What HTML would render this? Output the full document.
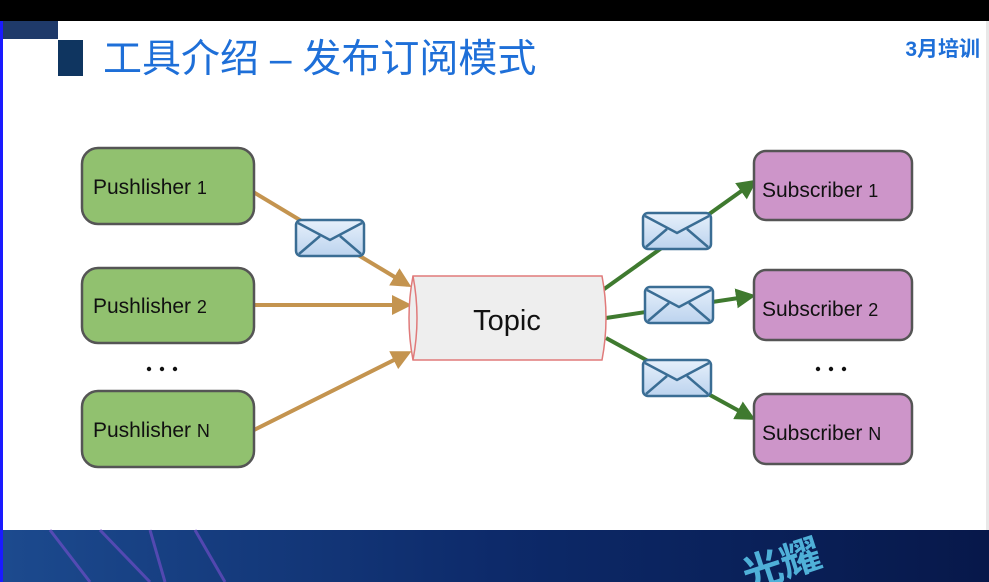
<!DOCTYPE html>
<html><head><meta charset="utf-8"><style>
html,body{margin:0;padding:0;width:989px;height:582px;overflow:hidden;background:#fff;font-family:"Liberation Sans","Noto Sans CJK SC",sans-serif}
</style></head><body>
<svg width="989" height="582" viewBox="0 0 989 582" xmlns="http://www.w3.org/2000/svg">
<defs>
<linearGradient id="bb" x1="0" y1="0" x2="1" y2="0"><stop offset="0" stop-color="#1c4a8e"/><stop offset="0.5" stop-color="#0d2a6a"/><stop offset="1" stop-color="#07184a"/></linearGradient>
<linearGradient id="env" x1="0" y1="0" x2="0" y2="1"><stop offset="0" stop-color="#e6f0fb"/><stop offset="1" stop-color="#bcd3ee"/></linearGradient>
<marker id="ao" markerWidth="5" markerHeight="5" refX="4" refY="2.5" orient="auto" markerUnits="strokeWidth"><path d="M0,0 L5,2.5 L0,5 z" fill="#c4944f"/></marker>
<marker id="ag" markerWidth="5" markerHeight="5" refX="4" refY="2.5" orient="auto" markerUnits="strokeWidth"><path d="M0,0 L5,2.5 L0,5 z" fill="#3f7a2f"/></marker>
<g id="envl"><rect x="0" y="0" width="68" height="36" rx="5" fill="url(#env)" stroke="#3a6d94" stroke-width="2.5"/><path d="M2,3 L34,20 L66,3 M3,34 L24,16 M65,34 L44,16" fill="none" stroke="#3a6d94" stroke-width="2.5"/></g>
</defs>
<rect x="0" y="0" width="989" height="21" fill="#000"/>
<rect x="0" y="21" width="3" height="561" fill="#1a1aff"/>
<rect x="986" y="21" width="3" height="509" fill="#e8e8e8"/>
<rect x="3" y="21" width="55" height="18" fill="#1f3a6a"/>
<rect x="58" y="40" width="25" height="36" fill="#0f3560"/>
<text x="103" y="72" font-size="39" fill="#1e6fd8" font-family="Liberation Sans,'Noto Sans CJK SC',sans-serif">工具介绍 – 发布订阅模式</text>
<text x="980" y="56" font-size="21" font-weight="bold" fill="#1e6fd8" text-anchor="end" font-family="Liberation Sans,'Noto Sans CJK SC',sans-serif">3月培训</text>
<rect x="3" y="530" width="986" height="52" fill="url(#bb)"/>
<g stroke="#7b4fd0" stroke-width="3" opacity="0.6"><line x1="50" y1="530" x2="90" y2="582"/><line x1="100" y1="530" x2="150" y2="582"/><line x1="150" y1="530" x2="165" y2="582"/><line x1="195" y1="530" x2="225" y2="582"/></g>
<text x="0" y="0" font-size="40" font-weight="bold" fill="#4fb0d8" transform="translate(748,590) rotate(-18)" font-family="'Noto Sans CJK SC',sans-serif">光耀</text>
<g stroke="#c4944f" stroke-width="4" fill="none">
<line x1="250" y1="190" x2="408" y2="285" marker-end="url(#ao)"/>
<line x1="254" y1="305" x2="408" y2="305" marker-end="url(#ao)"/>
<line x1="254" y1="430" x2="408" y2="353" marker-end="url(#ao)"/>
</g>
<g stroke="#3f7a2f" stroke-width="4" fill="none">
<line x1="600" y1="292" x2="754" y2="182" marker-end="url(#ag)"/>
<line x1="606" y1="318" x2="752" y2="296" marker-end="url(#ag)"/>
<line x1="606" y1="338" x2="752" y2="418" marker-end="url(#ag)"/>
</g>
<g stroke="#555" stroke-width="2.5">
<rect x="82" y="148" width="172" height="76" rx="16" fill="#91c16f"/>
<rect x="82" y="268" width="172" height="75" rx="16" fill="#91c16f"/>
<rect x="82" y="391" width="172" height="76" rx="16" fill="#91c16f"/>
<rect x="754" y="151" width="158" height="69" rx="12" fill="#cd95c9"/>
<rect x="754" y="270" width="158" height="70" rx="12" fill="#cd95c9"/>
<rect x="754" y="394" width="158" height="70" rx="12" fill="#cd95c9"/>
</g>
<g font-size="21" fill="#111">
<text x="93" y="194">Pushlisher <tspan font-size="18">1</tspan></text><text x="93" y="313">Pushlisher <tspan font-size="18">2</tspan></text><text x="93" y="437">Pushlisher <tspan font-size="18">N</tspan></text>
<text x="762" y="197">Subscriber <tspan font-size="18">1</tspan></text><text x="762" y="316">Subscriber <tspan font-size="18">2</tspan></text><text x="762" y="440">Subscriber <tspan font-size="18">N</tspan></text>
</g>
<g fill="#111"><circle cx="149" cy="369" r="2.2"/><circle cx="162" cy="369" r="2.2"/><circle cx="175" cy="369" r="2.2"/>
<circle cx="818" cy="369" r="2.2"/><circle cx="831" cy="369" r="2.2"/><circle cx="844" cy="369" r="2.2"/></g>
<path d="M413,276 L602,276 Q610,318 602,360 L413,360 Q405,318 413,276 z" fill="#eeeeee" stroke="#e07a7a" stroke-width="1.5"/>
<path d="M413,276 Q421,318 413,360" fill="none" stroke="#e07a7a" stroke-width="1.5"/>
<text x="507" y="330" font-size="29" fill="#111" text-anchor="middle">Topic</text>
<use href="#envl" x="296" y="220"/>
<use href="#envl" x="643" y="213"/>
<use href="#envl" x="645" y="287"/>
<use href="#envl" x="643" y="360"/>
</svg>
</body></html>
